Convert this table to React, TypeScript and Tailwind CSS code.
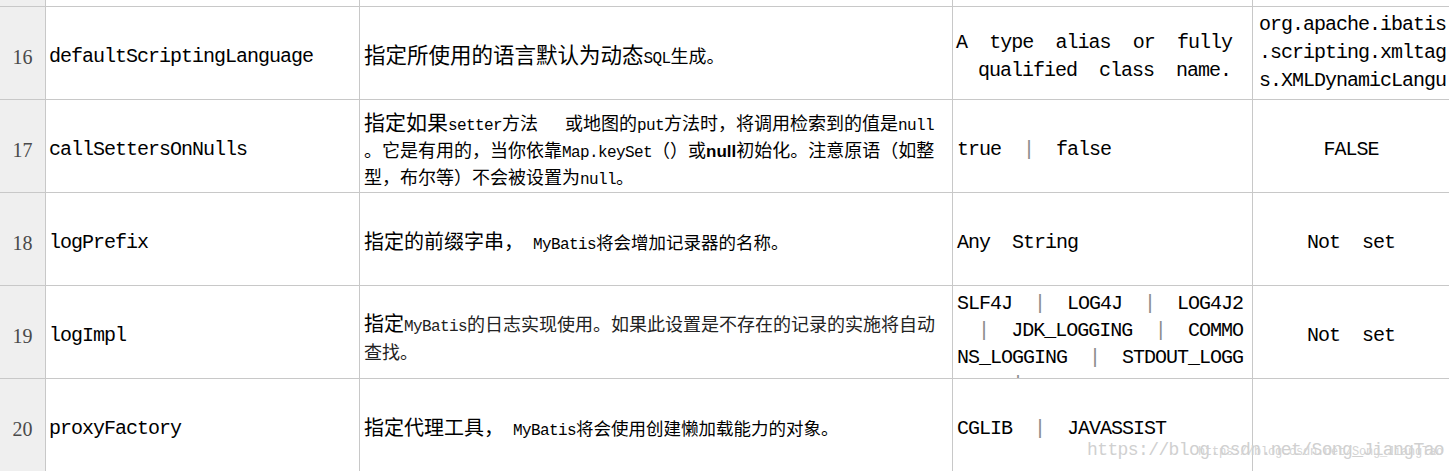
import type { ReactNode } from 'react';

// Latin runs inside the Chinese description text
const E = ({ children }: { children: ReactNode }) => (
    <span className="font-['Liberation_Mono',monospace] text-[16px] tracking-[-0.6px]">{children}</span>
);

const Bar = () => <span className="text-[#8c8c8c]">|</span>;

const head = "flex items-center justify-center bg-[#efefef] pt-[7px] font-['Liberation_Serif',serif] text-[20px] text-[#4a4a4a]";
const name = "flex items-center overflow-hidden whitespace-nowrap bg-white pl-[3px] pt-[7px] font-['Liberation_Mono',monospace] text-[20px] tracking-[-1px] text-black";
const desc = "flex items-center overflow-hidden whitespace-nowrap bg-white pl-[4px] font-['Noto_Sans_CJK_SC',sans-serif] text-black";
const val = "flex overflow-hidden whitespace-pre bg-white font-['Liberation_Mono',monospace] text-[20px] tracking-[-1px] text-black";

export default function App() {
    return (
        <div className="relative h-[471px] w-[1449px] overflow-hidden bg-white">
            <div className="grid h-[471px] w-[1449px] grid-cols-[45px_313px_592px_299px_196px] grid-rows-[6px_repeat(5,92px)] gap-px bg-[#c8c8c8]">
                {/* clipped row above */}
                <div className="bg-[#efefef]" />
                <div className="bg-white" />
                <div className="bg-white" />
                <div className="bg-white" />
                <div className="bg-white" />

                {/* 16 */}
                <div className={head}>16</div>
                <div className={name}>defaultScriptingLanguage</div>
                <div className={`${desc} pt-[7px]`}>
                    <div className="leading-[28px]">
                        <span className="text-[21.5px]">指定所使用的语言默认为动态</span>
                        <E>SQL</E>
                        <span className="text-[18px]">生成。</span>
                    </div>
                </div>
                <div className={`${val} items-center pl-[3px] pt-[7px]`}>
                    <div className="w-[276px] leading-[28px]">
                        <div className="flex justify-between">
                            <span>A</span>
                            <span>type</span>
                            <span>alias</span>
                            <span>or</span>
                            <span>fully</span>
                        </div>
                        <div>{'  qualified  class  name.'}</div>
                    </div>
                </div>
                <div className={`${val} flex-col items-start pl-[6px] pt-[4px] leading-[28px]`}>
                    <div>org.apache.ibatis</div>
                    <div>.scripting.xmltag</div>
                    <div>s.XMLDynamicLangu</div>
                </div>

                {/* 17 */}
                <div className={head}>17</div>
                <div className={name}>callSettersOnNulls</div>
                <div className={`${desc} pt-[9px]`}>
                    <div className="leading-[23px]">
                        <div className="whitespace-pre">
                            <span className="text-[21px]">指定如果</span>
                            <E>setter</E>
                            <span className="text-[18px]">方法</span>
                            <E>{'   '}</E>
                            <span className="text-[18px]">或地图的</span>
                            <E>put</E>
                            <span className="text-[18px]">方法时，将调用检索到的值是</span>
                            <E>null</E>
                        </div>
                        <div>
                            <span className="text-[18px]">。它是有用的，当你依靠</span>
                            <E>Map.keySet</E>
                            <span className="text-[18px]">（）或</span>
                            <span className="font-['Liberation_Sans',sans-serif] text-[17px] font-bold">null</span>
                            <span className="text-[18px]">初始化。注意原语（如整</span>
                        </div>
                        <div>
                            <span className="text-[18px]">型，布尔等）不会被设置为</span>
                            <E>null</E>
                            <span className="text-[18px]">。</span>
                        </div>
                    </div>
                </div>
                <div className={`${val} items-center pl-[4px] pt-[7px]`}>
                    {'true  '}
                    <Bar />
                    {'  false'}
                </div>
                <div className={`${val} items-center justify-center pt-[7px]`}>FALSE</div>

                {/* 18 */}
                <div className={head}>18</div>
                <div className={name}>logPrefix</div>
                <div className={`${desc} pt-[7px]`}>
                    <div className="whitespace-pre leading-[28px]">
                        <span className="text-[20px]">指定的前缀字串，</span>
                        <E> MyBatis</E>
                        <span className="text-[17.5px]">将会增加记录器的名称。</span>
                    </div>
                </div>
                <div className={`${val} items-center pl-[4px] pt-[7px]`}>{'Any  String'}</div>
                <div className={`${val} items-center justify-center pt-[7px]`}>{'Not  set'}</div>

                {/* 19 */}
                <div className={head}>19</div>
                <div className={name}>logImpl</div>
                <div className={`${desc} pt-[9px]`}>
                    <div className="leading-[24px] text-[#222]">
                        <div>
                            <span className="text-[20px] text-black">指定</span>
                            <E>MyBatis</E>
                            <span className="text-[18px]">的日志实现使用。如果此设置是不存在的记录的实施将自动</span>
                        </div>
                        <div className="text-[18px]">查找。</div>
                    </div>
                </div>
                <div className={`${val} flex-col items-start pl-[4px] pt-[4px] leading-[27px]`}>
                    <div className="flex w-[286px] justify-between">
                        <span>SLF4J</span>
                        <Bar />
                        <span>LOG4J</span>
                        <Bar />
                        <span>LOG4J2</span>
                    </div>
                    <div className="flex w-[286px] justify-between pl-[21px]">
                        <Bar />
                        <span>JDK_LOGGING</span>
                        <Bar />
                        <span>COMMO</span>
                    </div>
                    <div className="flex w-[286px] justify-between">
                        <span>NS_LOGGING</span>
                        <Bar />
                        <span>STDOUT_LOGG</span>
                    </div>
                    {/* top of the next, clipped line */}
                    <div className="pl-[55px]">
                        <Bar />
                    </div>
                </div>
                <div className={`${val} items-center justify-center pt-[7px]`}>{'Not  set'}</div>

                {/* 20 */}
                <div className={head}>20</div>
                <div className={name}>proxyFactory</div>
                <div className={`${desc} pt-[7px]`}>
                    <div className="whitespace-pre leading-[28px]">
                        <span className="text-[20px]">指定代理工具，</span>
                        <E> MyBatis</E>
                        <span className="text-[17.5px]">将会使用创建懒加载能力的对象。</span>
                    </div>
                </div>
                <div className={`${val} items-center pl-[4px] pt-[7px]`}>
                    {'CGLIB  '}
                    <Bar />
                    {'  JAVASSIST'}
                </div>
                <div className="bg-white" />
            </div>

            {/* overlapping watermarks */}
            <span className="absolute left-[1087px] top-[441px] whitespace-nowrap font-['Liberation_Mono',monospace] text-[18px] leading-none tracking-[-0.6px] text-[#d0d0d0]">
                https://blog.csdn.net/Song_JiangTao
            </span>
            <span className="absolute left-[1198px] top-[446px] whitespace-nowrap font-['Liberation_Mono',monospace] text-[12px] leading-none tracking-[-0.2px] text-[#d4d4d4]">
                https://blog.csdn.net/Song_JiangTao
            </span>
        </div>
    );
}
